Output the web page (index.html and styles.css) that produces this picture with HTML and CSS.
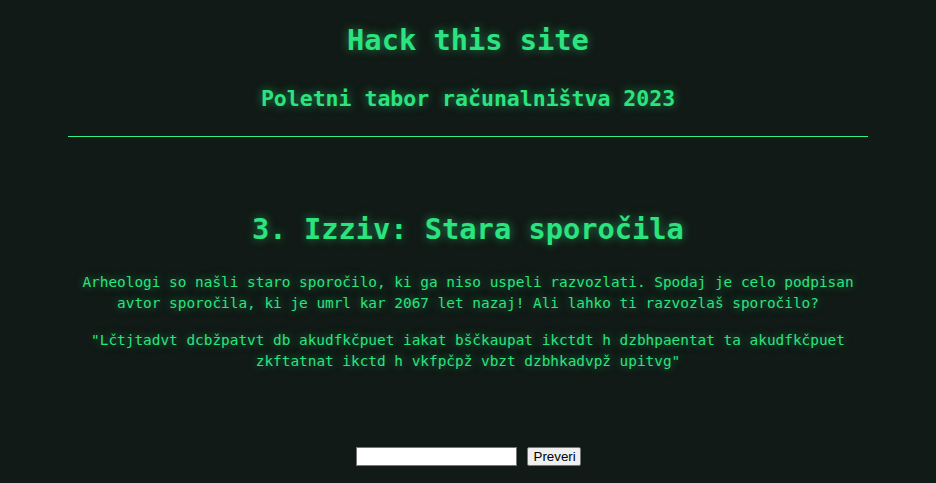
FILE: index.html
```html
<!DOCTYPE html>
<html lang="sl">
<head>
<meta charset="utf-8">
<title>Hack this site</title>
<link rel="stylesheet" href="styles.css">
</head>
<body>
<div class="page">
  <header class="site-header">
    <h1 class="site-title">Hack this site</h1>
    <h2 class="site-subtitle">Poletni tabor računalništva 2023</h2>
  </header>
  <div class="divider"></div>
  <main class="challenge">
    <h1 class="challenge-title">3. Izziv: Stara sporočila</h1>
    <p class="challenge-text">Arheologi so našli staro sporočilo, ki ga niso uspeli razvozlati. Spodaj je celo podpisan avtor sporočila, ki je umrl kar 2067 let nazaj! Ali lahko ti razvozlaš sporočilo?</p>
    <p class="challenge-quote">"Lčtjtadvt dcbžpatvt db akudfkčpuet iakat bščkaupat ikctdt h dzbhpaentat ta akudfkčpuet zkftatnat ikctd h vkfpčpž vbzt dzbhkadvpž upitvg"</p>
    <form class="answer-form">
      <input class="answer-input" type="text">
      <button class="answer-button" type="button">Preveri</button>
    </form>
  </main>
</div>
</body>
</html>
```
FILE: styles.css
```css
html, body {
  margin: 0;
  padding: 0;
  background: #111a16;
}
body {
  color: #2be37f;
  font-family: "DejaVu Sans Mono", "Liberation Mono", monospace;
}
.page {
  max-width: 800px;
  margin: 0 auto;
  text-align: center;
}
.site-header {
  padding-top: 22px;
}
.site-title,
.challenge-title {
  font-size: 28.7px;
  line-height: 37px;
  font-weight: bold;
  margin: 0;
  text-shadow: 0 0 10px rgba(43, 227, 127, 0.55);
}
.site-subtitle {
  font-size: 21.5px;
  line-height: 28px;
  font-weight: bold;
  margin: 26px 0 0;
  text-shadow: 0 0 10px rgba(43, 227, 127, 0.55);
}
.divider {
  height: 1px;
  background-color: #30f08a;
  margin-top: 23px;
}
.challenge {
  padding-top: 74px;
}
.challenge-text,
.challenge-quote {
  font-size: 14.4px;
  line-height: 21px;
  margin: 24px 0 0;
  text-shadow: 0 0 8px rgba(43, 227, 127, 0.5);
}
.challenge-quote {
  margin-top: 16px;
}
.answer-form {
  display: flex;
  justify-content: center;
  align-items: center;
  gap: 10px;
  margin-top: 75px;
}
.answer-input {
  box-sizing: border-box;
  width: 161px;
  height: 19px;
  margin: 0;
  padding: 1px 2px;
  border: 1px solid #767676;
  background: #fff;
  font-family: "Liberation Sans", Arial, sans-serif;
  font-size: 13.33px;
}
.answer-button {
  box-sizing: border-box;
  width: 54px;
  height: 19px;
  margin: 0;
  padding: 0 6px;
  border: 1px solid #767676;
  border-radius: 2px;
  background: #efefef;
  color: #000;
  font-family: "Liberation Sans", Arial, sans-serif;
  font-size: 13.33px;
  line-height: 15px;
}
```
